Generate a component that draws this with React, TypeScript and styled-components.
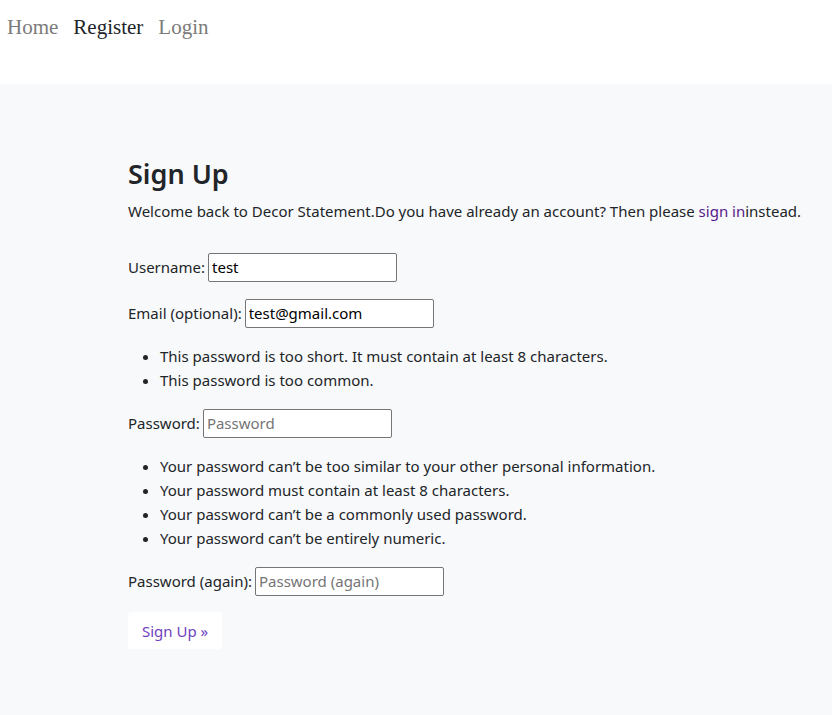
import styled, { createGlobalStyle } from "styled-components"

const GlobalStyle = createGlobalStyle`
  html, body {
    margin: 0;
    padding: 0;
  }
  body {
    background: #ffffff;
    color: #212529;
    font-family: "Noto Sans", "Open Sans", sans-serif;
    font-size: 15px;
    line-height: 24px;
  }
  * {
    box-sizing: border-box;
  }
`

const fields = {
  emailErrors: [
    "This password is too short. It must contain at least 8 characters.",
    "This password is too common.",
  ],
  passwordHelp: [
    "Your password can’t be too similar to your other personal information.",
    "Your password must contain at least 8 characters.",
    "Your password can’t be a commonly used password.",
    "Your password can’t be entirely numeric.",
  ],
}

const App = () => {
  return (
    <Page>
      <GlobalStyle />
      <Nav>
        <NavLink>Home</NavLink>
        <NavLink $active>Register</NavLink>
        <NavLink>Login</NavLink>
      </Nav>
      <Main>
        <Content>
          <Title>Sign Up</Title>
          <Lead>
            Welcome back to Decor Statement.Do you have already an account? Then please <Visited href="#">sign in</Visited>instead.
          </Lead>
          <Form onSubmit={(e) => e.preventDefault()}>
            <Row>
              <Label htmlFor="id_username">Username:</Label>
              <Input id="id_username" defaultValue="test" />
            </Row>
            <Row>
              <Label htmlFor="id_email">Email (optional):</Label>
              <Input id="id_email" type="email" defaultValue="test@gmail.com" />
            </Row>
            <List>
              {fields.emailErrors.map((t) => <li key={t}>{t}</li>)}
            </List>
            <Row>
              <Label htmlFor="id_password1">Password:</Label>
              <Input id="id_password1" type="password" placeholder="Password" />
            </Row>
            <List>
              {fields.passwordHelp.map((t) => <li key={t}>{t}</li>)}
            </List>
            <Row>
              <Label htmlFor="id_password2">Password (again):</Label>
              <Input id="id_password2" type="password" placeholder="Password (again)" />
            </Row>
            <Submit type="submit">Sign Up &raquo;</Submit>
          </Form>
        </Content>
      </Main>
    </Page>
  )
}

export default App

const Page = styled.div`
    display: flex;
    flex-direction: column;
    min-height: 715px;
`

const Nav = styled.nav`
    display: flex;
    align-items: flex-start;
    gap: 15px;
    height: 84px;
    padding: 12px 0 0 7px;
    background: #ffffff;
`

const NavLink = styled.a<{ $active?: boolean }>`
    font-family: "Liberation Serif", "DejaVu Serif", serif;
    font-size: 21px;
    line-height: 30px;
    color: ${(p) => (p.$active ? "#212529" : "#7b7b7b")};
    text-decoration: none;
    cursor: pointer;
`

const Main = styled.main`
    flex: 1;
    background: #f8f9fa;
    padding-top: 73px;
`

const Content = styled.div`
    padding-left: 128px;
`

const Title = styled.h2`
    margin: 0 0 8px;
    font-size: 27px;
    font-weight: 600;
    line-height: 34px;
`

const Lead = styled.p`
    margin: 0 0 29px;
    white-space: nowrap;
`

const Visited = styled.a`
    color: #551a8b;
    text-decoration: none;
`

const Form = styled.form`
    display: flex;
    flex-direction: column;
    align-items: flex-start;
`

const Row = styled.p`
    display: flex;
    align-items: center;
    gap: 3px;
    margin: 0 0 16px;
    height: 30px;
`

const Label = styled.label`
    color: #212529;
`

const Input = styled.input`
    width: 189px;
    height: 29px;
    padding: 1px 3px;
    border: 1px solid #767676;
    border-radius: 2px;
    background: #ffffff;
    font-family: inherit;
    font-size: 15px;
    color: #000000;

    &::placeholder {
        color: #757575;
    }
`

const List = styled.ul`
    margin: 0 0 16px;
    padding-left: 32px;
    line-height: 24px;
`

const Submit = styled.button`
    height: 37px;
    padding: 0 14px;
    border: none;
    border-radius: 4px;
    background: #ffffff;
    color: #6f42c1;
    font-family: inherit;
    font-size: 15px;
    cursor: pointer;
`
